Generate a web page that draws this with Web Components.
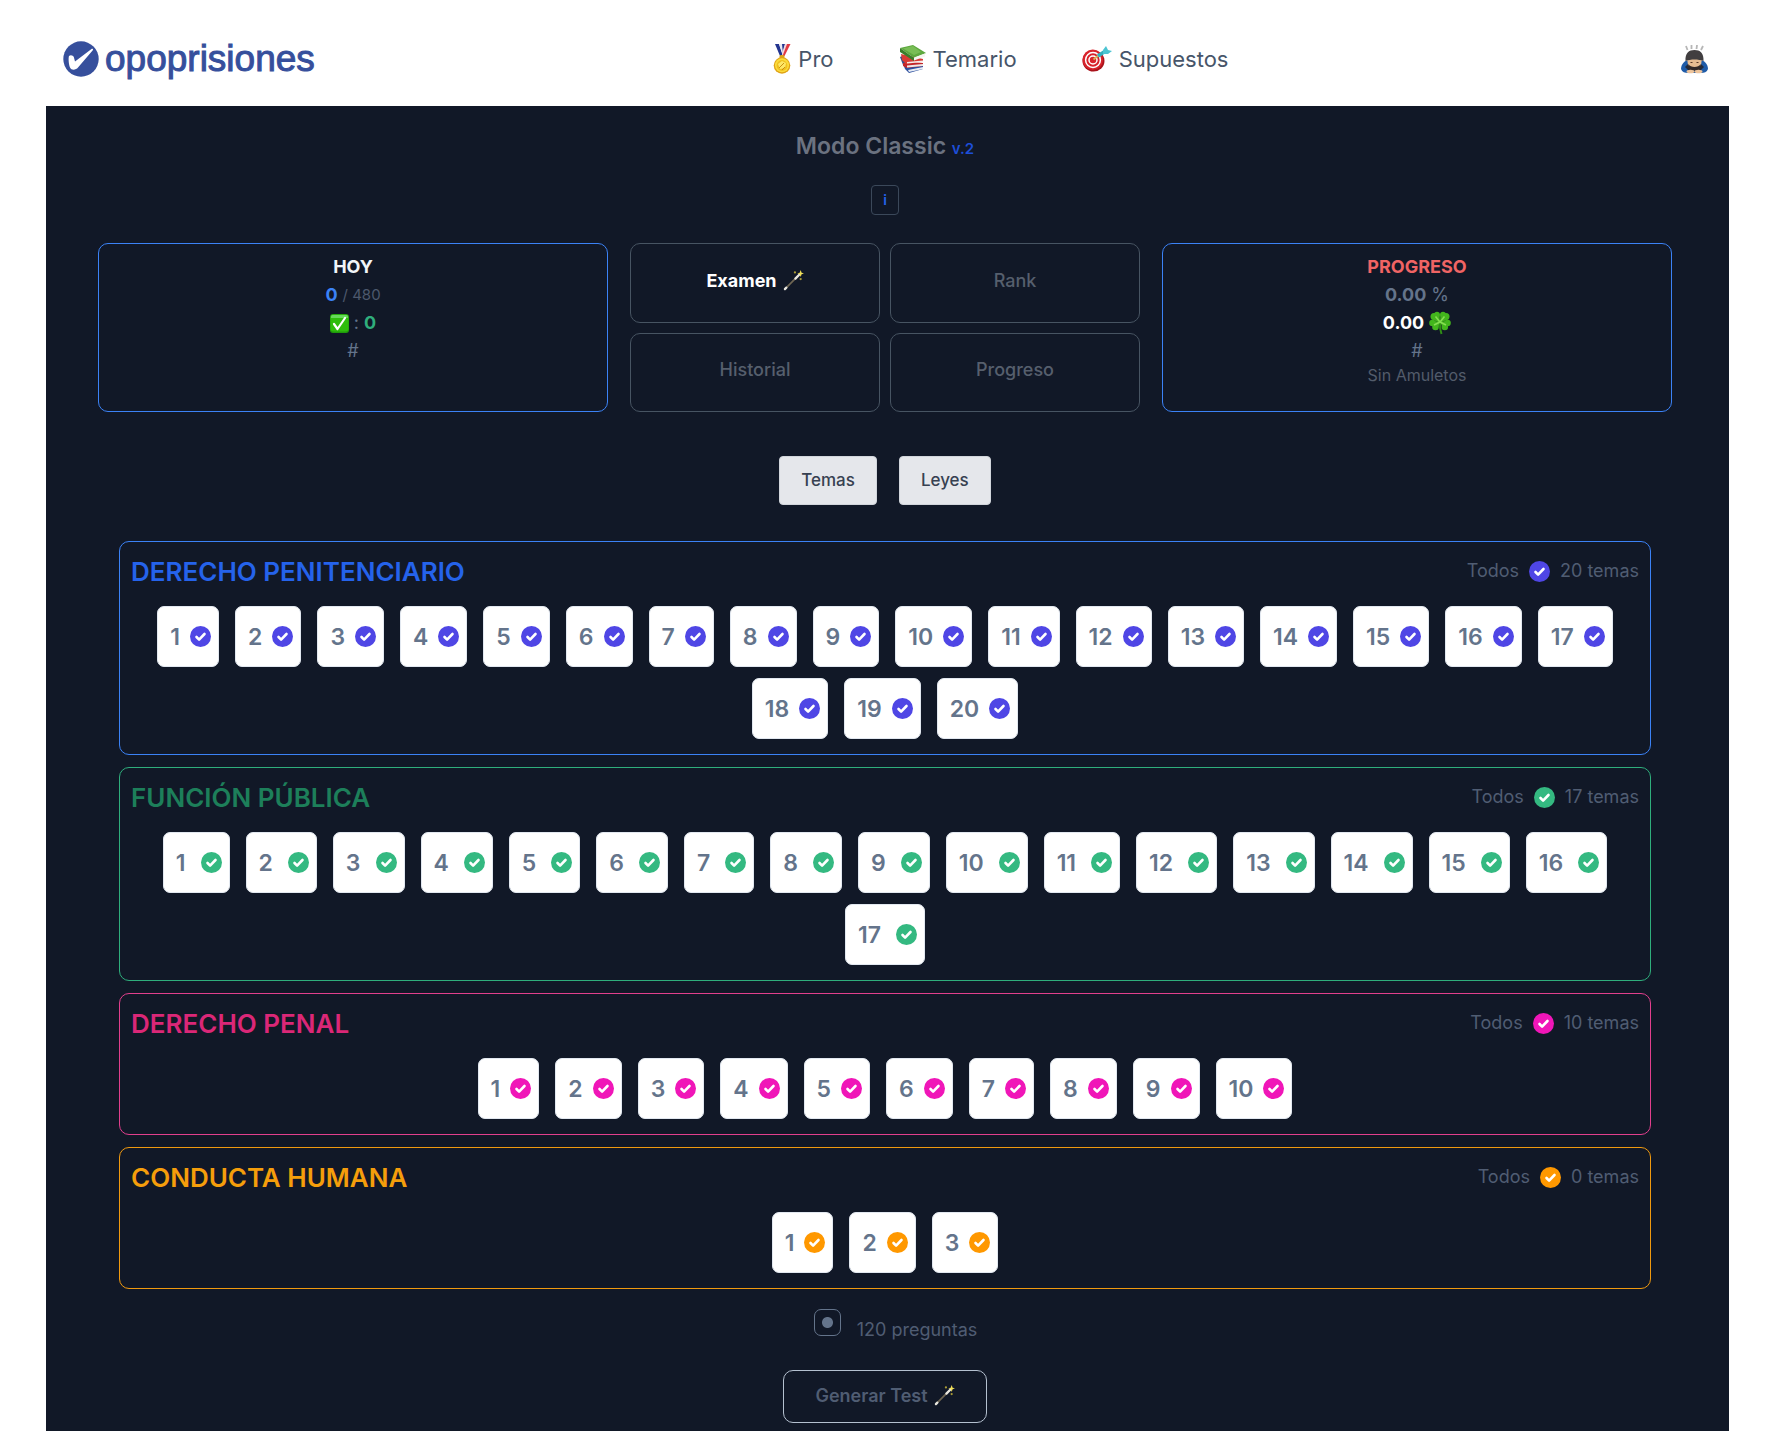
<!DOCTYPE html>
<html lang="es">
<head>
<meta charset="utf-8">
<meta name="viewport" content="width=device-width, initial-scale=1">
<title>opoprisiones</title>
<style>
  body { margin: 0; background: #fff; font-family: Inter, "Liberation Sans", sans-serif; color: #64748b; }
</style>
</head>
<body>
<opo-app></opo-app>

<script>
const ICONS = {
  medal: ['0 0 18 30', `
    <path d="M2 0h4l4 12H7z" fill="#23358f"/><path d="M6 0h3l2 9-1 3z" fill="#e9e9f2"/>
    <path d="M9 0h3l-2 10z" fill="#23358f"/><path d="M12 0h2l-4 12-1-3z" fill="#f3d8dc"/><path d="M14 0h3.500l-6 12H9.500z" fill="#e23a44"/>
    <rect x="6.500" y="11" width="5" height="4" rx="1.500" fill="#d9a21b"/>
    <circle cx="9" cy="21.500" r="8.300" fill="#e0a416"/><circle cx="9" cy="21.200" r="7" fill="#fbdc3c"/>
    <circle cx="9" cy="21.500" r="5.400" fill="#f0c01f"/><path d="M5 20l4-3 4 2-1 5-5 1z" fill="#fde766"/><path d="M6 24l5-5M9 26l3-3" stroke="#c98f12" stroke-width="1"/>`],
  books: ['0 0 27 28', `
    <path d="M4 19l20 1v4L10 28l-4-4z" fill="#2c4f9e"/><path d="M9 25l15-3v2l-14 3z" fill="#e8edf5"/>
    <path d="M1 12l5-2 2 12-4-2z" fill="#2f4d8c"/>
    <path d="M4 18l20 0v3L8 23l-4-2z" fill="#c3262a"/><path d="M8 20.500l16-1.500v2L8 22.500z" fill="#efe9e8"/>
    <path d="M2 9l22 5v3L7 19l-4-4z" fill="#d83a34"/><path d="M8 17l16-1.500v1.500L8 18.500z" fill="#f3efee"/>
    <path d="M1 3L14 0l13 8-12 5z" fill="#5da83e"/><path d="M1 3l14 10v3L1 7z" fill="#397d2b"/><path d="M15 12.500l11-4v3l-11 4z" fill="#f4f5ef"/><path d="M4 3.500l10-2.500 8 6-7 3z" fill="#78bd55"/>`],
  target: ['0 0 30 26', `
    <ellipse cx="11.500" cy="15" rx="11" ry="10.500" fill="#a9121b"/><circle cx="10.800" cy="13.800" r="10.300" fill="#d8232b"/>
    <circle cx="11" cy="14" r="7.400" fill="none" stroke="#fff" stroke-width="1.500"/><circle cx="11" cy="14" r="4" fill="none" stroke="#fff" stroke-width="1.500"/>
    <path d="M11.500 13.500L17 9" stroke="#d9b35b" stroke-width="1.800"/><path d="M16 10L25 4" stroke="#35aebd" stroke-width="3.600"/>
    <path d="M21 4l3-4 2 4 4 1-4 3-5 0z" fill="#4cc4d2"/>`],
  bow: ['0 0 27 30', `
    <path d="M5 2l1.500 4M10.500 1v4M16 1l-.500 4M22 2l-2 4" stroke="#b6b6b6" stroke-width="1.800" fill="none"/>
    <path d="M0 25c0-5 4-9 8-9h11c4 0 8 4 8 9-1 3-4 4-7 4H7c-3 0-6-1-7-4z" fill="#1e5ba8"/>
    <path d="M4 23l5-5h9l5 5-5 5H9z" fill="#222b3d"/>
    <path d="M6 14h15l-1 7c-2 4-11 4-13 0z" fill="#e7bd92"/>
    <path d="M4.500 17C4 9 8 6 13.500 6S23 9 22.500 17c-5-2-13-2-18 0z" fill="#413e40"/>
    <path d="M7 20c3 4 10 4 13 0l-1 6H8z" fill="#332a28"/><path d="M9.500 18.500h2M15.500 18.500h2" stroke="#5a3b2a" stroke-width="1"/>
    <ellipse cx="9.500" cy="27.500" rx="4" ry="1.800" fill="#eec49b"/><ellipse cx="17.500" cy="27.500" rx="4" ry="1.800" fill="#eec49b"/>`],
  tick: ['0 0 19 19', `
    <rect width="19" height="19" rx="3" fill="#1f9a0b"/><rect x=".500" y=".500" width="18" height="17" rx="3" fill="#2fbd0c"/><path d="M1 3c0-2 1-2 3-2h11c2 0 3 0 3 2l0 1H1z" fill="#66d95a"/>
    <path d="M4 10l3.500 5L15 4" fill="none" stroke="#fff" stroke-width="2.200" stroke-linecap="round" stroke-linejoin="round"/>`],
  clover: ['0 0 22 24', `
    <path d="M11 11c-.500 5 0 8 1.500 12" stroke="#2f8f14" stroke-width="2" fill="none"/>
    <g fill="#43b61d"><circle cx="5" cy="5.500" r="3.500"/><circle cx="8" cy="3.700" r="2.900"/><path d="M2.500 8L10.500 2.500 11 12z"/>
    <circle cx="14" cy="3.700" r="2.900"/><circle cx="17" cy="5.500" r="3.500"/><path d="M11.500 2.500l8 5.500L11 12z"/>
    <circle cx="3.500" cy="12" r="3.300"/><circle cx="6.500" cy="16" r="3.300"/><path d="M2 9.500l9 1.500-3 8z"/>
    <circle cx="18.500" cy="12" r="3.300"/><circle cx="15.800" cy="16" r="3.300"/><path d="M20 9.500l-9 1.500 4 8z"/></g>
    <path d="M11 11L6.500 5.500M11 11l4.500-5.500M11 11l-6 3M11 11l6 3" stroke="#86dd52" stroke-width="1.600"/>`],
  wand: ['0 0 22 22', `
    <path d="M2 20L16 6" stroke="#6f6653" stroke-width="1.800"/><path d="M2 20l1.500-1.500M13 9l4-4" stroke="#e8e6de" stroke-width="2.400" stroke-linecap="round"/>
    <path d="M18.500 0l1 2.800 2.500.700-2.500 1-1 2.800-1-2.800-2.500-1 2.500-.700z" fill="#f2e05a"/>
    <circle cx="12.500" cy="2.500" r="1.200" fill="#a89a36"/><circle cx="18.500" cy="9.500" r="1.200" fill="#a89a36"/>`],
  brand: ['0 0 36 36', `
    <circle cx="18" cy="18" r="17.700" fill="#364f9c"/>
    <path d="M6 15c1.500-1.500 4-.800 4.800 1l1.200 4.500L28.500 8c1-.600 2 .300 1.300 1.300L15 26.500c-2 2.500-6.500 3.200-8 0-1.200-3-1.800-9-1-11.500z" fill="#fff"/>`]
};

function define(name, css, html) {
  const template = document.createElement('template');
  customElements.define(name, class extends HTMLElement {
    connectedCallback() {
      if (this.shadowRoot) return;
      const root = this.attachShadow({ mode: 'open' });
      template.innerHTML = `<style>*{box-sizing:border-box}${css}</style>${typeof html === 'function' ? html(this) : html}`;
      root.append(template.content.cloneNode(true));
    }
  });
}

define('opo-icon', `
  :host { display: inline-flex; flex: none; width: var(--w, 21px); height: var(--h, 21px); vertical-align: middle; }
  svg { width: 100%; height: 100%; display: block; }`,
  el => { const [box, art] = ICONS[el.getAttribute('name')]; return `<svg viewBox="${box}" aria-hidden="true">${art}</svg>`; });

define('opo-header', `
  :host { display: block; }
  header { display: flex; align-items: center; justify-content: space-between; height: 106px; padding: 12px 65px 0 63px; }
  a { color: inherit; text-decoration: none; display: flex; align-items: center; }
  .brand { gap: 6px; color: #364f9c; font: 400 37px/40px "Liberation Sans", Arial, sans-serif; -webkit-text-stroke: 1px #364f9c; }
  nav { display: flex; gap: 65px; margin-left: 6px; font-size: 22px; line-height: 32px; color: #475569; }
  nav a { gap: 7px; }
  button { border: 0; padding: 0; background: none; display: flex; }`, `
  <header>
    <a class="brand" href="#"><opo-icon name="brand" style="--w:36px;--h:36px"></opo-icon><span>opoprisiones</span></a>
    <nav>
      <a href="#pro"><opo-icon name="medal" style="--w:18px;--h:30px"></opo-icon>Pro</a>
      <a href="#temario"><opo-icon name="books" style="--w:27px;--h:28px"></opo-icon>Temario</a>
      <a href="#supuestos"><opo-icon name="target" style="--w:30px;--h:26px"></opo-icon>Supuestos</a>
    </nav>
    <button aria-label="Perfil"><opo-icon name="bow" style="--w:27px;--h:30px"></opo-icon></button>
  </header>`);

define('stat-card', `
  :host { display: block; border: 1px solid #3b82f6; border-radius: 10px; padding: 9px; text-align: center; font-size: 18px; line-height: 28px; }
  h2 { margin: 0; font-size: 18px; line-height: 28px; font-weight: 700; color: var(--title, #f1f5f9); }`,
  el => `<h2>${el.getAttribute('heading')}</h2><slot></slot>`);

define('stat-line', `
  :host { display: flex; justify-content: center; align-items: center; gap: 5px; height: 28px; color: #64748b; }
  :host([small]) { font-size: 16px; height: 20px; color: #535c6b; }`, `<slot></slot>`);

define('mode-button', `
  :host { display: grid; }
  button { display: flex; align-items: center; justify-content: center; gap: 6px; border: 1px solid #475462; border-radius: 10px; background: none; font: 500 18px/24px Inter, sans-serif; color: #565f6d; padding: 0 0 4px; }
  :host([active]) button { color: #fff; font-weight: 700; }`, `<button type="button"><slot></slot></button>`);

define('tab-button', `
  :host { display: block; }
  button { height: 49px; padding: 0 21px 2px; border: 1px solid #d1d5db; border-radius: 4px; background: #e5e7eb; color: #374151; font: 500 17px/24px Inter, sans-serif; }`,
  `<button type="button"><slot></slot></button>`);

define('check-mark', `
  :host { display: grid; flex: none; width: 21px; height: 21px; }
  input, svg { grid-area: 1 / 1; width: 100%; height: 100%; margin: 0; }
  input { appearance: none; border-radius: 50%; background: var(--check); }
  svg { pointer-events: none; fill: none; stroke: #fff; stroke-width: 2.600; stroke-linecap: round; stroke-linejoin: round; }`,
  el => `<input type="checkbox" checked aria-label="${el.getAttribute('label')}"><svg viewBox="0 0 21 21" aria-hidden="true"><path d="M6.500 11l2.600 2.600L14.500 8"/></svg>`);

define('topic-chip', `
  :host { display: block; }
  label { display: flex; align-items: center; gap: var(--chip-gap, 10px); height: 61px; padding: 0 7px 0 12px; border: 1px solid #e2e8f0; border-radius: 7px; background: #fff; color: #64748b; font-size: 23px; line-height: 32px; font-weight: 600; }`,
  el => `<label><span>${el.getAttribute('n')}</span><check-mark label="Tema ${el.getAttribute('n')}"></check-mark></label>`);

define('topic-panel', `
  :host { display: block; border: 1px solid var(--line); border-radius: 10px; padding: 12px 11px 15px; }
  header { display: flex; justify-content: space-between; height: 52px; }
  h2 { margin: 0; color: var(--title); font-size: 26px; line-height: 36px; font-weight: 600; }
  .all { display: flex; align-items: center; gap: 10px; height: 34px; font-size: 18px; line-height: 24px; color: #505d73; }
  .chips { display: flex; flex-wrap: wrap; justify-content: center; gap: 11px 16px; }`,
  el => {
    const count = +el.getAttribute('chips');
    const chips = Array.from({ length: count }, (_, i) => `<topic-chip n="${i + 1}"></topic-chip>`).join('');
    return `<header><h2>${el.getAttribute('heading')}</h2><div class="all"><span>Todos</span><check-mark label="Todos"></check-mark><span>${el.getAttribute('total')} temas</span></div></header><div class="chips">${chips}</div>`;
  });

define('opo-app', `
  :host { display: block; padding-bottom: 11px; }
  main { margin: 0 44px 0 46px; padding: 24px 57px 8px 52px; background: #111827; display: flex; flex-direction: column; align-items: center; }
  h1 { margin: 0; font-size: 23px; line-height: 32px; font-weight: 600; color: #6b7280; }
  h1 small { font-size: 15px; color: #1d4ed8; }
  .info { width: 28px; height: 30px; margin: 20px 0 28px; padding: 0; border: 1px solid #3b485a; border-radius: 4px; background: none; color: #2563eb; font: 600 14px/20px Inter, sans-serif; }
  .top { align-self: stretch; display: grid; grid-template-columns: repeat(3, 1fr); gap: 22px; }
  .modes { display: grid; grid-template: 1fr 1fr / 1fr 1fr; gap: 10px; height: 169px; }
  .tabs { display: flex; gap: 22px; margin: 44px 0 36px; }
  .panels { align-self: stretch; display: flex; flex-direction: column; gap: 12px; padding: 0 21px; }
  .count { display: flex; align-items: flex-start; gap: 16px; margin: 20px 0 28px; padding-left: 21px; font-size: 18px; line-height: 24px; color: #505d73; }
  .count span { padding-top: 9px; }
  .count input { appearance: none; width: 27px; height: 27px; margin: 0; border: 1px solid #64748b; border-radius: 7px; background: radial-gradient(circle, #64748b 5px, transparent 6px); }
  .go { display: flex; align-items: center; gap: 6px; height: 53px; padding: 0 31px 2px; border: 1px solid #b4c0cf; border-radius: 10px; background: none; color: #505d73; font: 600 18px/24px Inter, sans-serif; }
  small { font-size: 15px; color: #4d596d; }`, `
  <opo-header></opo-header>
  <main>
    <h1>Modo Classic <small>v.2</small></h1>
    <button class="info" type="button">i</button>
    <section class="top">
      <stat-card heading="HOY">
        <stat-line><b style="color:#3b82f6">0</b><small>/ 480</small></stat-line>
        <stat-line><opo-icon name="tick" style="--w:19px;--h:19px"></opo-icon>:<b style="color:#2fae7c">0</b></stat-line>
        <stat-line>#</stat-line>
      </stat-card>
      <div class="modes">
        <mode-button active>Examen <opo-icon name="wand"></opo-icon></mode-button>
        <mode-button>Rank</mode-button>
        <mode-button>Historial</mode-button>
        <mode-button>Progreso</mode-button>
      </div>
      <stat-card heading="PROGRESO" style="--title:#f06464">
        <stat-line><b>0.00</b>%</stat-line>
        <stat-line style="color:#fff"><b>0.00</b><opo-icon name="clover" style="--w:22px;--h:24px"></opo-icon></stat-line>
        <stat-line>#</stat-line>
        <stat-line small>Sin Amuletos</stat-line>
      </stat-card>
    </section>
    <div class="tabs"><tab-button>Temas</tab-button><tab-button>Leyes</tab-button></div>
    <section class="panels">
      <topic-panel heading="DERECHO PENITENCIARIO" chips="20" total="20" style="--line:#3b82f6;--title:#2563eb;--check:#4f46e5"></topic-panel>
      <topic-panel heading="FUNCIÓN PÚBLICA" chips="17" total="17" style="--line:#2fae7c;--title:#1d7f5a;--check:#34b981;--chip-gap:15px"></topic-panel>
      <topic-panel heading="DERECHO PENAL" chips="10" total="10" style="--line:#e23f8d;--title:#db2777;--check:#f016b8"></topic-panel>
      <topic-panel heading="CONDUCTA HUMANA" chips="3" total="0" style="--line:#f0990f;--title:#f59e0b;--check:#ff9800"></topic-panel>
    </section>
    <label class="count"><input type="radio" name="preguntas"><span>120 preguntas</span></label>
    <button class="go" type="button">Generar Test <opo-icon name="wand"></opo-icon></button>
  </main>`);
</script>
</body>
</html>
